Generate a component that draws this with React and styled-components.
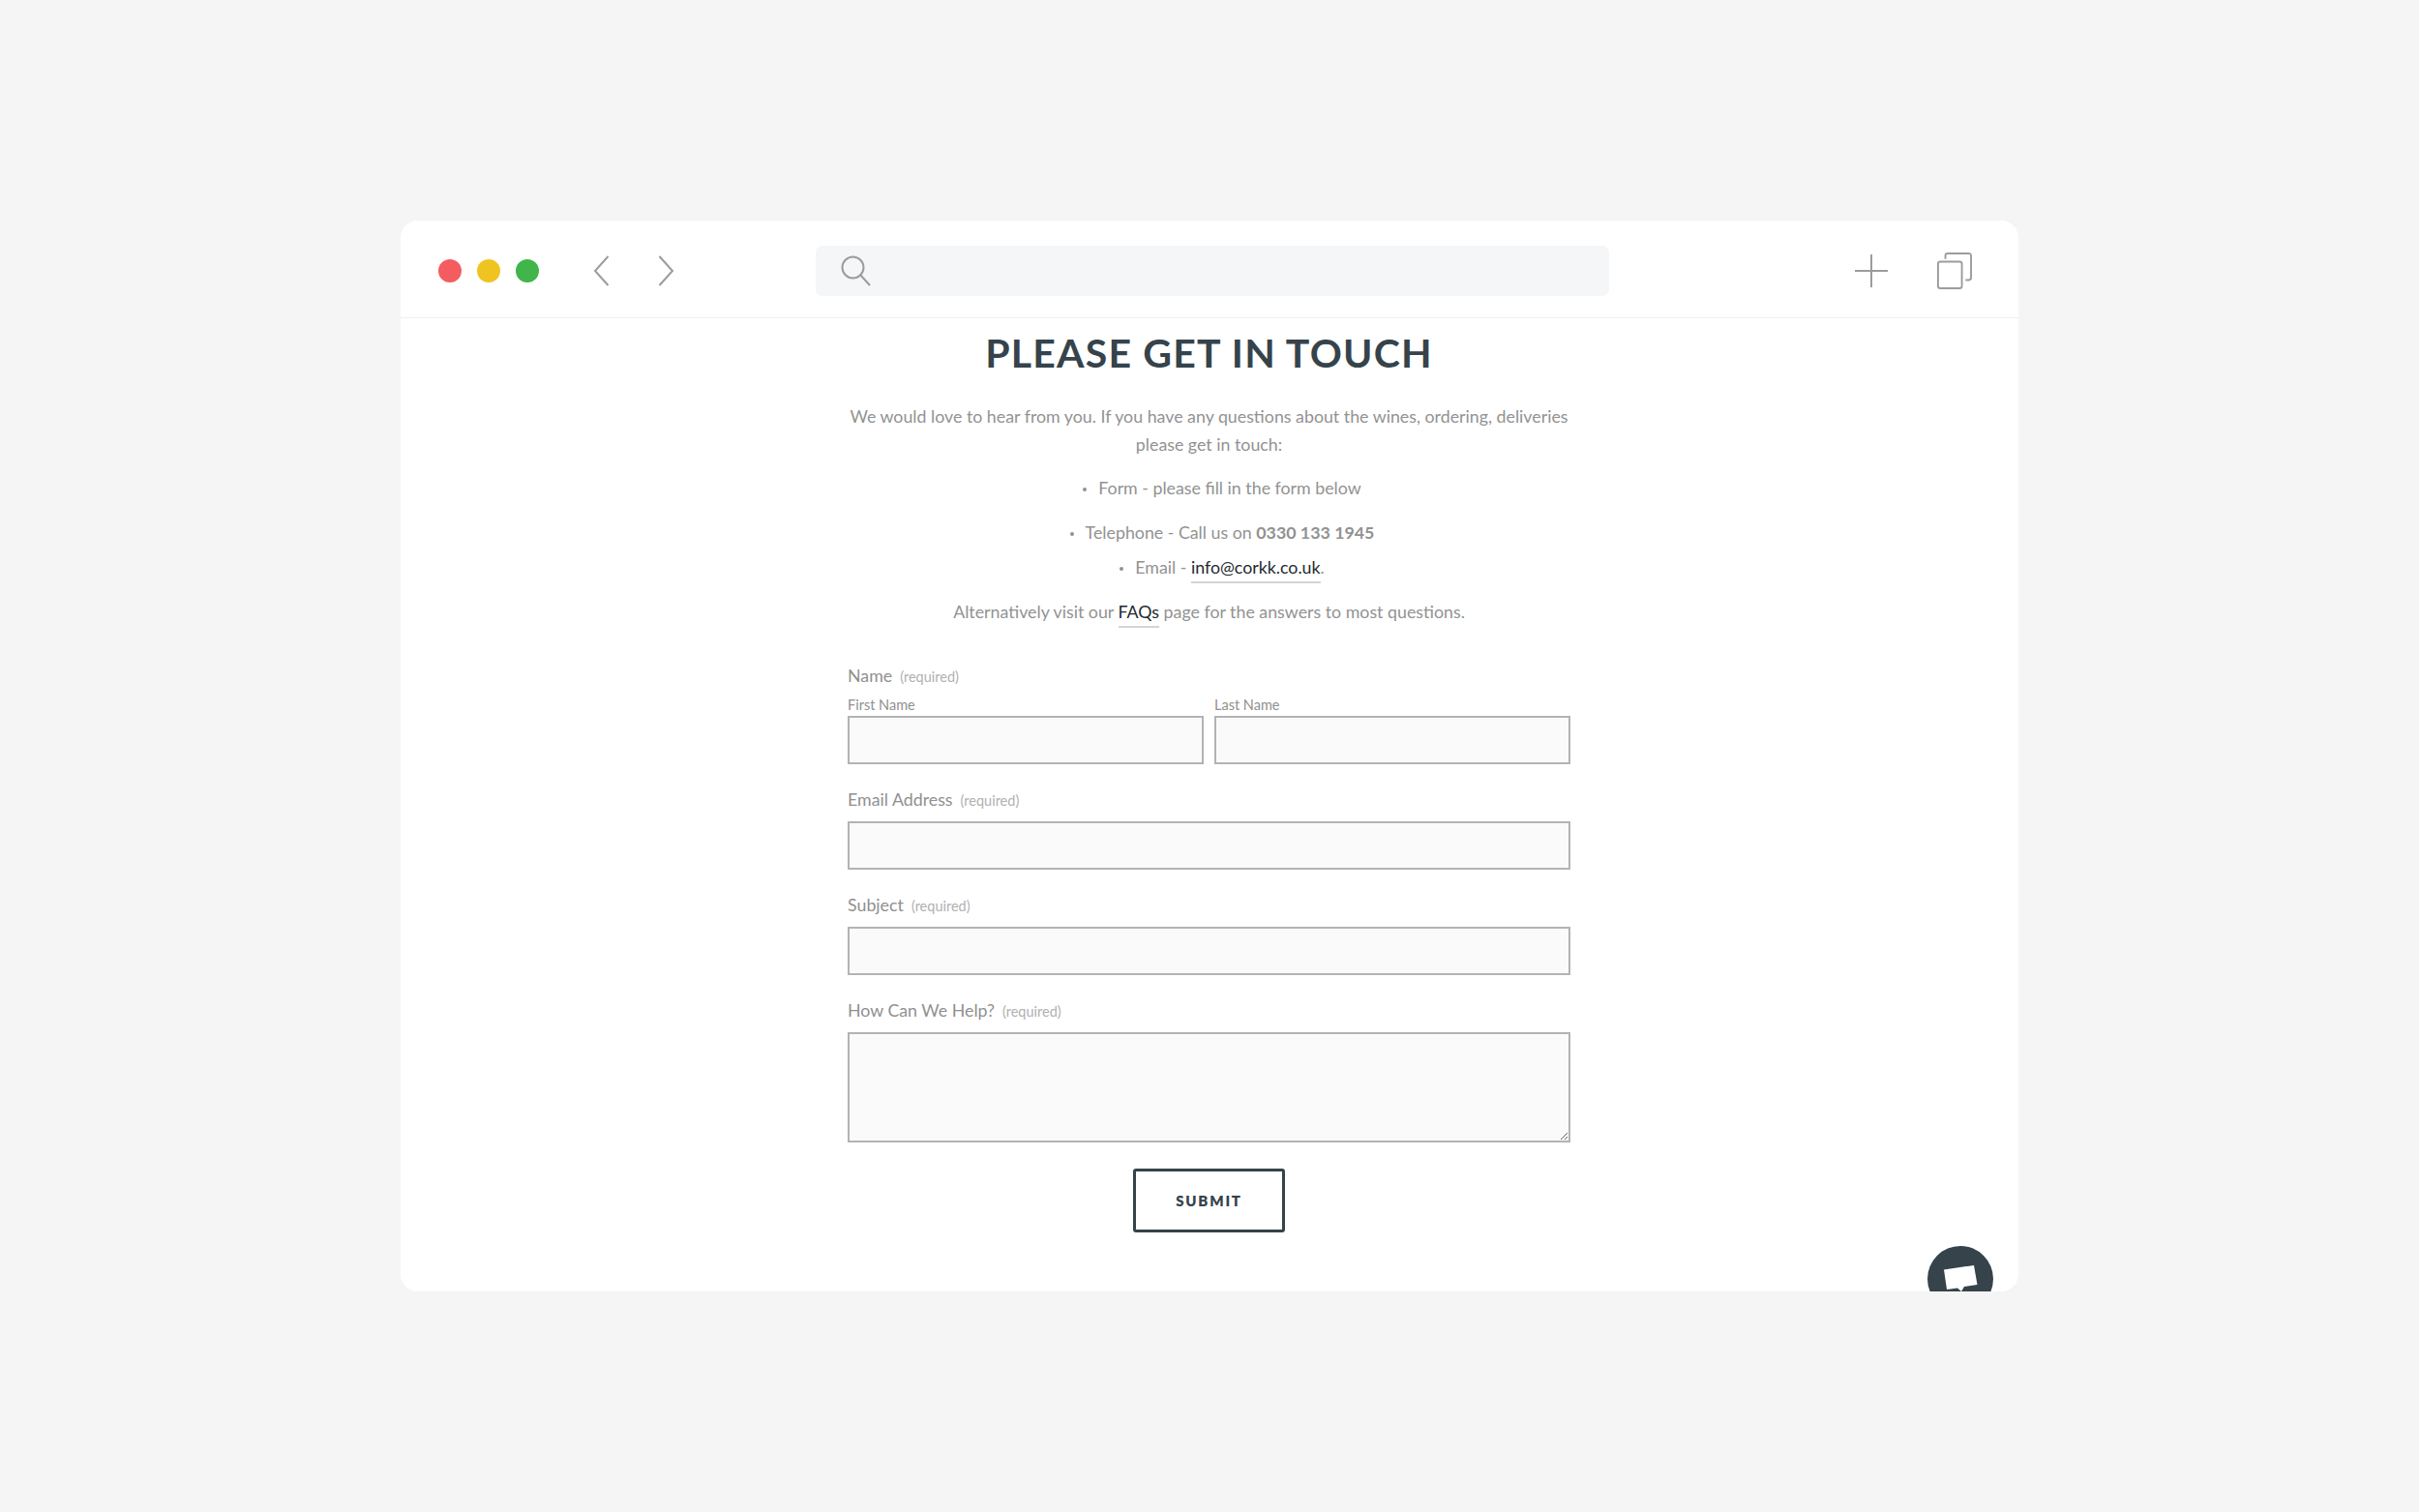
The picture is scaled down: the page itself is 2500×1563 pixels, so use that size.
import React from "react";
import styled, { createGlobalStyle } from "styled-components";

const GlobalStyle = createGlobalStyle`
  html, body {
    margin: 0;
    padding: 0;
    background: #f5f5f5;
  }
  * {
    box-sizing: border-box;
  }
`;

const BODY_FONT = `Lato, "Open Sans", sans-serif`;

const App = () => (
  <Page>
    <GlobalStyle />
    <BrowserWindow>
      <Toolbar>
        <Dots>
          <Dot color="#f45c5f" />
          <Dot color="#efc420" />
          <Dot color="#3fb54a" />
        </Dots>
        <NavButtons>
          <svg width="17" height="32" viewBox="0 0 17 32" fill="none" stroke="#9c9c9c" strokeWidth="2">
            <path d="M15.5 1 L2 16 L15.5 31" />
          </svg>
          <svg width="17" height="32" viewBox="0 0 17 32" fill="none" stroke="#9c9c9c" strokeWidth="2">
            <path d="M1.5 1 L15 16 L1.5 31" />
          </svg>
        </NavButtons>
        <SearchBar>
          <svg width="32" height="32" viewBox="0 0 32 32" fill="none" stroke="#9c9c9c" strokeWidth="2">
            <circle cx="12.5" cy="12.5" r="11" />
            <path d="M20.5 20.5 L30 31" />
          </svg>
        </SearchBar>
        <Actions>
          <svg width="34" height="34" viewBox="0 0 34 34" fill="none" stroke="#9c9c9c" strokeWidth="2">
            <path d="M17 0 V34 M0 17 H34" />
          </svg>
          <svg width="36" height="38" viewBox="0 0 38 40" fill="none" stroke="#9c9c9c" strokeWidth="2">
            <rect x="1" y="10" width="26" height="29" rx="2.5" />
            <path d="M9 7 V3.5 A2.5 2.5 0 0 1 11.5 1 H34.5 A2.5 2.5 0 0 1 37 3.5 V27.5 A2.5 2.5 0 0 1 34.5 30 H31" />
          </svg>
        </Actions>
      </Toolbar>
      <Content>
        <Heading>PLEASE GET IN TOUCH</Heading>
        <Intro>
          We would love to hear from you. If you have any questions about the wines, ordering, deliveries
          <br />
          please get in touch:
        </Intro>
        <ContactList>
          <ContactItem gap={17}>Form - please fill in the form below</ContactItem>
          <ContactItem gap={7}>
            Telephone - Call us on <strong>0330 133 1945</strong>
          </ContactItem>
          <ContactItem gap={0}>
            Email - <TextLink href="#">info@corkk.co.uk</TextLink>.
          </ContactItem>
        </ContactList>
        <Outro>
          Alternatively visit our <TextLink href="#">FAQs</TextLink> page for the answers to most questions.
        </Outro>
        <Form>
          <Field top={0}>
            <Label>
              Name<Required>(required)</Required>
            </Label>
            <NameRow>
              <div>
                <SubLabel>First Name</SubLabel>
                <Input />
              </div>
              <div>
                <SubLabel>Last Name</SubLabel>
                <Input />
              </div>
            </NameRow>
          </Field>
          <Field top={24}>
            <Label $spaced>
              Email Address<Required>(required)</Required>
            </Label>
            <Input />
          </Field>
          <Field top={24}>
            <Label $spaced>
              Subject<Required>(required)</Required>
            </Label>
            <Input />
          </Field>
          <Field top={24}>
            <Label $spaced>
              How Can We Help?<Required>(required)</Required>
            </Label>
            <TextArea />
          </Field>
          <Submit type="button">SUBMIT</Submit>
        </Form>
      </Content>
      <ChatBubble>
        <svg width="36" height="32" viewBox="0 0 36 32">
          <path d="M0 4.5 L31 0 L34.5 20 L21 22 L18 27 L14 23.5 L3 25 Z" fill="#fff" />
        </svg>
      </ChatBubble>
    </BrowserWindow>
  </Page>
);

export default App;

const Page = styled.div`
  min-height: 1563px;
  padding: 228px 414px 0;
`;

const BrowserWindow = styled.div`
  position: relative;
  width: 1672px;
  height: 1107px;
  background: #fff;
  border-radius: 18px;
  overflow: hidden;
`;

const Toolbar = styled.div`
  height: 101px;
  display: flex;
  align-items: center;
  padding: 3px 48px 0 39px;
  border-bottom: 1px solid #efefef;
`;

const Dots = styled.div`
  display: flex;
  gap: 16px;
`;

const Dot = styled.span`
  width: 24px;
  height: 24px;
  border-radius: 50%;
  background: ${(props) => props.color};
`;

const NavButtons = styled.div`
  display: flex;
  gap: 50px;
  margin-left: 56px;
`;

const SearchBar = styled.div`
  width: 820px;
  height: 52px;
  margin-left: 146px;
  padding: 10px 0 0 26px;
  background: #f5f6f8;
  border-radius: 7px;
`;

const Actions = styled.div`
  display: flex;
  align-items: center;
  gap: 51px;
  margin-left: auto;
`;

const Content = styled.div`
  width: 747px;
  margin-left: 462px;
  color: #929292;
  font-family: ${BODY_FONT};
  font-size: 17.8px;
  text-align: center;
`;

const Heading = styled.h1`
  margin: 11px 0 0;
  color: #36434b;
  font-family: Lato, sans-serif;
  font-size: 41px;
  font-weight: 700;
  line-height: 50px;
  letter-spacing: 1.2px;
`;

const Intro = styled.p`
  margin: 26px 0 0;
  line-height: 29px;
`;

const ContactList = styled.ul`
  margin: 16px 0 0;
  padding: 0 0 0 27px;
  list-style: none;
`;

const ContactItem = styled.li`
  line-height: 29px;
  margin-bottom: ${(props) => props.gap}px;

  &::before {
    content: "";
    display: inline-block;
    width: 4px;
    height: 4px;
    margin-right: 12px;
    border-radius: 50%;
    background: #929292;
    vertical-align: 3px;
  }

  strong {
    font-weight: 700;
  }
`;

const TextLink = styled.a`
  color: #1f2a30;
  text-decoration: none;
  padding-bottom: 4px;
  border-bottom: 2px solid #d4d4d4;
`;

const Outro = styled.p`
  margin: 17px 0 0;
  line-height: 29px;
`;

const Form = styled.form`
  margin-top: 39px;
  text-align: left;
  display: flex;
  flex-direction: column;
`;

const Field = styled.div`
  margin-top: ${(props) => props.top}px;
`;

const Label = styled.div`
  display: flex;
  align-items: baseline;
  font-size: 17.8px;
  line-height: 24px;
  color: #909090;
  margin-bottom: ${(props) => (props.$spaced ? "11px" : "0")};
`;

const Required = styled.span`
  margin-left: 8px;
  font-size: 14.5px;
  line-height: 1;
  color: #b0b0b0;
`;

const SubLabel = styled.div`
  font-size: 14.5px;
  line-height: 20px;
  margin-bottom: 1px;
  color: #909090;
`;

const NameRow = styled.div`
  display: grid;
  grid-template-columns: 1fr 1fr;
  gap: 11px;
  margin-top: 9px;
`;

const Input = styled.input`
  display: block;
  width: 100%;
  height: 50px;
  background: #fafafa;
  border: 2px solid #b3b3b3;
  border-radius: 0;
  outline: none;
`;

const TextArea = styled.textarea`
  display: block;
  width: 100%;
  height: 114px;
  background: #fafafa;
  border: 2px solid #b3b3b3;
  border-radius: 0;
  outline: none;
`;

const Submit = styled.button`
  align-self: center;
  width: 157px;
  height: 66px;
  margin-top: 27px;
  background: #fff;
  border: 3px solid #36434b;
  border-radius: 3px;
  color: #36434b;
  font-family: Lato, sans-serif;
  font-size: 15px;
  font-weight: 800;
  letter-spacing: 1.8px;
`;

const ChatBubble = styled.div`
  position: absolute;
  left: 1578px;
  top: 1060px;
  width: 68px;
  height: 68px;
  border-radius: 50%;
  background: #36434b;
  padding: 20px 0 0 17px;
`;
